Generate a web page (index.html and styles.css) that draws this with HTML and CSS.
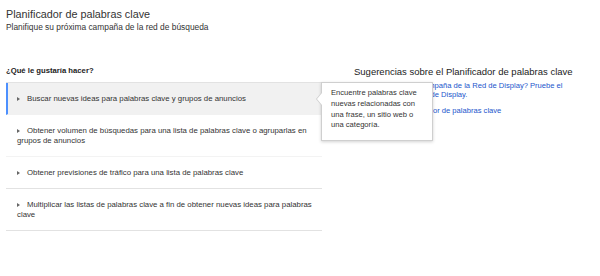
FILE: index.html
```html
<!DOCTYPE html>
<html lang="es">
<head>
<meta charset="utf-8">
<title>Planificador de palabras clave</title>
<link rel="stylesheet" href="styles.css">
</head>
<body>
<div class="page">
  <header class="header">
    <h1 class="title">Planificador de palabras clave</h1>
    <p class="subtitle">Planifique su próxima campaña de la red de búsqueda</p>
  </header>
  <div class="main">
    <section class="left">
      <h2 class="label">¿Qué le gustaría hacer?</h2>
      <div class="list">
        <div class="item active"><span class="bullet"></span>Buscar nuevas ideas para palabras clave y grupos de anuncios</div>
        <div class="item faint"><span class="bullet"></span>Obtener volumen de búsquedas para una lista de palabras clave o agruparlas en grupos de anuncios</div>
        <div class="item"><span class="bullet"></span>Obtener previsiones de tráfico para una lista de palabras clave</div>
        <div class="item"><span class="bullet"></span>Multiplicar las listas de palabras clave a fin de obtener nuevas ideas para palabras clave</div>
        <div class="tooltip">Encuentre palabras clave nuevas relacionadas con una frase, un sitio web o una categoría.</div>
      </div>
    </section>
    <aside class="right">
      <h2 class="side-title">Sugerencias sobre el Planificador de palabras clave</h2>
      <p class="tip"><a href="#">¿Está creando una campaña de la Red de Display? Pruebe el Planificador de la Red de Display.</a></p>
      <p class="tip"><a href="#">Consejos del Planificador de palabras clave</a></p>
    </aside>
  </div>
</div>
</body>
</html>
```
FILE: styles.css
```css
* { box-sizing: border-box; }
body {
  margin: 0;
  font-family: "Liberation Sans", Arial, sans-serif;
  color: #333;
  background: #fff;
}
.page { padding: 7px 6px 0 6px; }
.title {
  margin: 0;
  font-size: 10.8px;
  line-height: 14px;
  font-weight: normal;
  color: #333;
}
.subtitle {
  margin: 1px 0 0 0;
  font-size: 8.4px;
  line-height: 10px;
  color: #333;
}
.main {
  display: flex;
  gap: 32px;
  margin-top: 34px;
}
.left { width: 316px; flex: none; }
.label {
  margin: 0 0 6px 0;
  font-size: 7.7px;
  line-height: 10px;
  font-weight: bold;
  color: #222;
}
.list {
  position: relative;
  border-top: 1px solid #e2e2e2;
}
.item {
  padding: 10.5px 10px 10.5px 11px;
  font-size: 7.8px;
  line-height: 10px;
  color: #333;
  border-bottom: 1px solid #e2e2e2;
}
.item.active {
  background: #f1f1f1;
  border-left: 2px solid #4d90fe;
  padding-left: 9px;
  border-bottom-color: #f1f1f1;
}
.item.faint { border-bottom-color: #f3f3f3; }
.bullet {
  display: inline-block;
  width: 0;
  height: 0;
  border-left: 3px solid #666;
  border-top: 2.5px solid transparent;
  border-bottom: 2.5px solid transparent;
  margin-right: 7px;
  vertical-align: 0;
}
.tooltip {
  position: absolute;
  left: 315px;
  top: -1px;
  width: 112px;
  padding: 5px 9px 9px 9px;
  background: #fff;
  border: 1px solid #cfcfcf;
  box-shadow: 0 1px 3px rgba(0,0,0,0.18);
  font-size: 7.6px;
  line-height: 10.8px;
  color: #333;
}
.tooltip::before,
.tooltip::after {
  content: "";
  position: absolute;
  top: 10px;
  width: 0;
  height: 0;
  border-top: 6px solid transparent;
  border-bottom: 6px solid transparent;
}
.tooltip::before { left: -6px; border-right: 5px solid #cfcfcf; }
.tooltip::after { left: -5px; border-right: 5px solid #fff; }
.right { width: 230px; flex: none; }
.side-title {
  margin: 0;
  font-size: 9.5px;
  line-height: 11px;
  font-weight: normal;
  color: #222;
}
.tip {
  margin: 5px 0 0 0;
  font-size: 7.6px;
  line-height: 8.8px;
}
.tip + .tip { margin-top: 7px; }
.tip a { color: #1a55cc; text-decoration: none; }
```
